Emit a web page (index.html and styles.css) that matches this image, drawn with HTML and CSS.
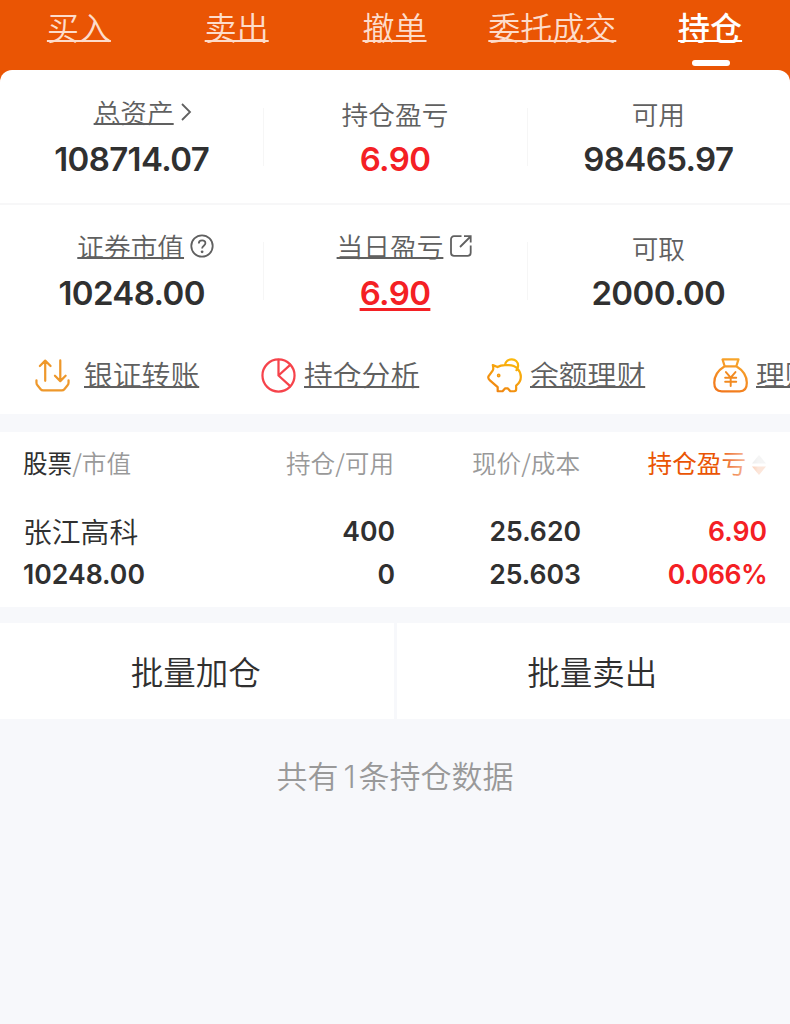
FILE: index.html
```html
<!DOCTYPE html>
<html lang="zh-CN">
<head>
    <meta charset="UTF-8">
    <meta name="viewport" content="width=device-width, initial-scale=1.0">
    <title>持仓</title>
    <link rel="stylesheet" href="styles.css">
</head>
<body>
    <nav class="tabs">
        <a class="tab">买入</a>
        <a class="tab">卖出</a>
        <a class="tab">撤单</a>
        <a class="tab">委托成交</a>
        <a class="tab active">持仓</a>
    </nav>

    <main>
        <section class="summary">
            <div class="summary-row">
                <div class="cell">
                    <div class="label linked total">
                        <a>总资产</a>
                        <svg class="icon-arrow" width="12" height="20" viewBox="0 0 12 20"><path d="M2 2l8 8-8 8"/></svg>
                    </div>
                    <div class="value">108714.07</div>
                </div>
                <div class="cell">
                    <div class="label">持仓盈亏</div>
                    <div class="value red">6.90</div>
                </div>
                <div class="cell">
                    <div class="label">可用</div>
                    <div class="value">98465.97</div>
                </div>
            </div>
            <div class="summary-row">
                <div class="cell">
                    <div class="label linked market">
                        <a>证券市值</a>
                        <svg class="icon-help" width="24" height="24" viewBox="0 0 24 24"><circle cx="12" cy="12" r="10.7"/><path d="M8.800 9.400c0-4.100 6.600-3.900 6.600-.2 0 2.500-3.300 2.500-3.300 5.300"/><circle class="dot" cx="12.1" cy="17.8" r="1.4"/></svg>
                    </div>
                    <div class="value">10248.00</div>
                </div>
                <div class="cell">
                    <div class="label linked">
                        <a>当日盈亏</a>
                        <svg class="icon-open" width="24" height="24" viewBox="0 0 24 24"><path d="M12.500 2.200H5a3 3 0 0 0-3 3v13.600a3 3 0 0 0 3 3h13.700a3 3 0 0 0 3-3V11.500M11 13L21.500 2.500M15 2.200h6.700V8.500"/></svg>
                    </div>
                    <div class="value red underline">6.90</div>
                </div>
                <div class="cell">
                    <div class="label">可取</div>
                    <div class="value">2000.00</div>
                </div>
            </div>
        </section>

        <section class="shortcuts">
            <a class="shortcut wide">
                <svg width="36" height="36" viewBox="0 0 36 36" stroke="#ee982b"><path d="M10.500 23.500V3.200M5 8.200l5.500-5.500 5.500 5.500M26 2.500v20.800M20.500 18.300l5.500 5.500 5.500-5.500M1.500 23v2.500q0 1.500 1 2.600l3.300 4q1 1.200 2.600 1.200h19.200q1.600 0 2.600-1.200l3.300-4q1-1.100 1-2.600V23"/></svg>
                <span>银证转账</span>
            </a>
            <a class="shortcut">
                <svg width="36" height="36" viewBox="0 0 36 36" stroke="#f6434b"><circle cx="18" cy="18" r="16.5"/><path d="M18 2v16l12 11M18 18L30 7"/></svg>
                <span>持仓分析</span>
            </a>
            <a class="shortcut">
                <svg width="36" height="36" viewBox="0 0 36 36" stroke="url(#gold)">
                    <defs>
                        <linearGradient id="gold" gradientUnits="userSpaceOnUse" x1="26" y1="2" x2="8" y2="34"><stop offset="0" stop-color="#fbb80b"/><stop offset="1" stop-color="#ef8412"/></linearGradient>
                    </defs>
                    <path d="M6 7.300L10.800 9.300Q14 7.300 18.500 7.300H22.500C30 7.300 34.800 13 34.800 19.500Q34.800 24.500 30 28.500V32Q30 34.200 28 34.200H24L21.500 31.300H18.500L16 34.200H11V30L3 23Q.7 21 1.500 19L5.800 13Q7 11.500 6 7.300ZM18.500 7.300C19.500-.8 32-.5 32 8Q32 10.500 30.300 12.500"/>
                    <circle cx="12" cy="18" r=".8"/>
                </svg>
                <span>余额理财</span>
            </a>
            <a class="shortcut">
                <svg width="36" height="36" viewBox="0 0 36 36" stroke="url(#amber)">
                    <defs>
                        <linearGradient id="amber" x1="0.7" y1="0" x2="0.3" y2="1"><stop offset="0" stop-color="#f7a62b"/><stop offset="1" stop-color="#f2791d"/></linearGradient>
                    </defs>
                    <path d="M9.800 1.500H26.200L24 8.500H12ZM12 8.500C5.500 12.500 1.300 18.500 1.300 25.500Q1.300 34.300 9 34.300H27.500Q34.800 34.300 34.800 25.500C34.800 18.500 30.500 12.500 24 8.500"/>
                    <path stroke="#f28a20" stroke-width="2" d="M13.300 14.500l4.900 5.800 4.900-5.800M18.200 20.300v8.500M12.500 20.300h11.400M12.500 24.500h11.400"/>
                </svg>
                <span>理财</span>
            </a>
        </section>

        <section class="holdings">
            <div class="row head">
                <div><b>股票</b>/市值</div>
                <div>持仓/可用</div>
                <div>现价/成本</div>
                <div class="sorted">
                    持仓盈亏
                    <svg width="14" height="22" viewBox="0 0 14 22"><path fill="#bbb" d="M7 1l7 8.500H0z"/><path fill="#eb5505" d="M7 21l7-8.500H0z"/></svg>
                </div>
            </div>
            <div class="row">
                <div class="name">张江高科</div>
                <div>400</div>
                <div>25.620</div>
                <div class="red">6.90</div>
            </div>
            <div class="row">
                <div>10248.00</div>
                <div>0</div>
                <div>25.603</div>
                <div class="red rate">0.066%</div>
            </div>
        </section>

        <section class="batch">
            <button>批量加仓</button>
            <button>批量卖出</button>
        </section>

        <p class="count">共有<span>1</span>条持仓数据</p>
    </main>
</body>
</html>
```

FILE: styles.css
```css
* {
    box-sizing: border-box;
}
body {
    font-family: 'Noto Sans CJK SC', sans-serif;
    font-weight: 350;
    margin: 0;
    background-color: #f7f8fb;
    color: #303030;
    overflow: hidden;
}
.red {
    color: #f42024;
}

/* top tabs */
.tabs {
    display: flex;
    height: 82px;
    padding: 4px 1px 0 0;
    background-color: #ea5504;
}
.tab {
    flex: 1;
    display: flex;
    flex-direction: column;
    align-items: center;
    font-size: 32px;
    line-height: 44px;
    color: #fddccb;
    text-decoration: underline;
    text-decoration-thickness: 2px;
    text-underline-offset: 0;
    text-decoration-skip-ink: none;
}
.tab.active {
    color: #fff;
    font-weight: 500;
}
.tab.active::after {
    content: '';
    width: 38px;
    height: 6px;
    margin: 12px 0 0 1px;
    border-radius: 3px;
    background-color: #fff;
}

/* account summary */
.summary {
    margin-top: -12px;
    background-color: #fff;
    border-radius: 12px 12px 0 0;
}
.summary-row {
    display: grid;
    grid-template-columns: repeat(3, 1fr);
    height: 135px;
    padding-top: 25px;
    background: linear-gradient(#f7f7f8, #f7f7f8) no-repeat 0 133px / 100% 2px;
}
.summary-row:last-child {
    height: 129px;
    padding-top: 24px;
    background: none;
}
.cell {
    text-align: center;
}
.cell + .cell {
    background: linear-gradient(#f6f6f6, #f6f6f6) no-repeat 0 13px / 1px 58px;
}
.label {
    height: 38px;
    font-size: 26.7px;
    line-height: 38px;
    color: #606060;
}
.label.linked {
    display: flex;
    justify-content: center;
    gap: 6px;
    padding-left: 20px;
    line-height: 33px;
}
.label.total {
    padding-left: 22px;
}
.label.market {
    padding-left: 28px;
}
.label a {
    text-decoration: underline;
    text-decoration-thickness: 2px;
    text-underline-offset: 0;
    text-decoration-skip-ink: none;
}
.label svg {
    fill: none;
    stroke: #606060;
    stroke-width: 1.8;
    margin-top: 5px;
}
.label .icon-arrow {
    margin-top: 7px;
}
.label .dot {
    fill: #606060;
    stroke: none;
}
.value {
    margin-top: 6px;
    font-family: Inter, sans-serif;
    font-size: 33px;
    font-weight: 600;
    line-height: 40px;
    letter-spacing: -0.6px;
}
.underline {
    text-decoration: underline;
    text-decoration-thickness: 3px;
    text-underline-offset: 3px;
}

/* shortcut links, scrolls off to the right */
.shortcuts {
    display: flex;
    height: 80px;
    padding-left: 35px;
    background-color: #fff;
    overflow: hidden;
}
.shortcut {
    flex: 0 0 226px;
    display: flex;
    align-items: center;
    gap: 8px;
    font-size: 28.8px;
    color: #606060;
    white-space: nowrap;
}
.shortcut.wide {
    gap: 14px;
}
.shortcut svg {
    flex: none;
    width: 35px;
    height: 35px;
    margin-top: 2px;
    fill: none;
    stroke-width: 2.3;
    stroke-linecap: round;
    stroke-linejoin: round;
}
.shortcut span {
    margin-top: -1px;
    text-decoration: underline;
    text-decoration-thickness: 2px;
    text-underline-offset: 0;
    text-decoration-skip-ink: none;
}

/* holdings table */
.holdings {
    margin-top: 18px;
    height: 175px;
    background-color: #fff;
}
.row {
    display: grid;
    grid-template-columns: 186px 186px 186px 186px;
    padding: 0 23px;
    font-family: Inter, sans-serif;
    font-size: 26.6px;
    font-weight: 600;
    line-height: 44px;
    height: 43px;
    text-align: right;
}
.row div:first-child {
    text-align: left;
}
.row .name {
    font-family: 'Noto Sans CJK SC', sans-serif;
    font-size: 28.8px;
    font-weight: 350;
}
.row .rate {
    letter-spacing: -0.6px;
}
.row.head {
    position: relative;
    height: 77px;
    line-height: 60px;
    font-family: 'Noto Sans CJK SC', sans-serif;
    font-size: 24.6px;
    font-weight: 350;
    color: #999;
}
.row.head b {
    font-weight: 400;
    color: #303030;
}
.row.head div {
    margin-left: -1px;
    margin-right: 1px;
}
.row.head div:first-child {
    margin: 0;
}
.row.head::after {
    content: '';
    position: absolute;
    right: 22px;
    top: 10px;
    width: 50px;
    height: 44px;
    background: linear-gradient(to right, rgba(255, 255, 255, 0), rgba(255, 255, 255, 0.85) 80%);
}
.row .sorted {
    display: flex;
    justify-content: flex-end;
    align-items: center;
    gap: 6px;
    height: 60px;
    color: #ea5504;
    font-weight: 400;
}
.sorted svg {
    margin-top: 6px;
}

/* batch buttons */
.batch {
    display: flex;
    gap: 3px;
    margin-top: 16px;
}
.batch button {
    flex: 1;
    height: 96px;
    padding: 0 2px 2px 0;
    border: none;
    background-color: #fff;
    color: #303030;
    font-family: inherit;
    font-size: 32.5px;
    font-weight: 350;
}
.count {
    margin: 34px 0 0;
    font-size: 31px;
    line-height: 44px;
    text-align: center;
    color: #999;
}
.count span {
    margin: 0 3px 0 5px;
    font-family: Inter, sans-serif;
    font-weight: 300;
}
```
